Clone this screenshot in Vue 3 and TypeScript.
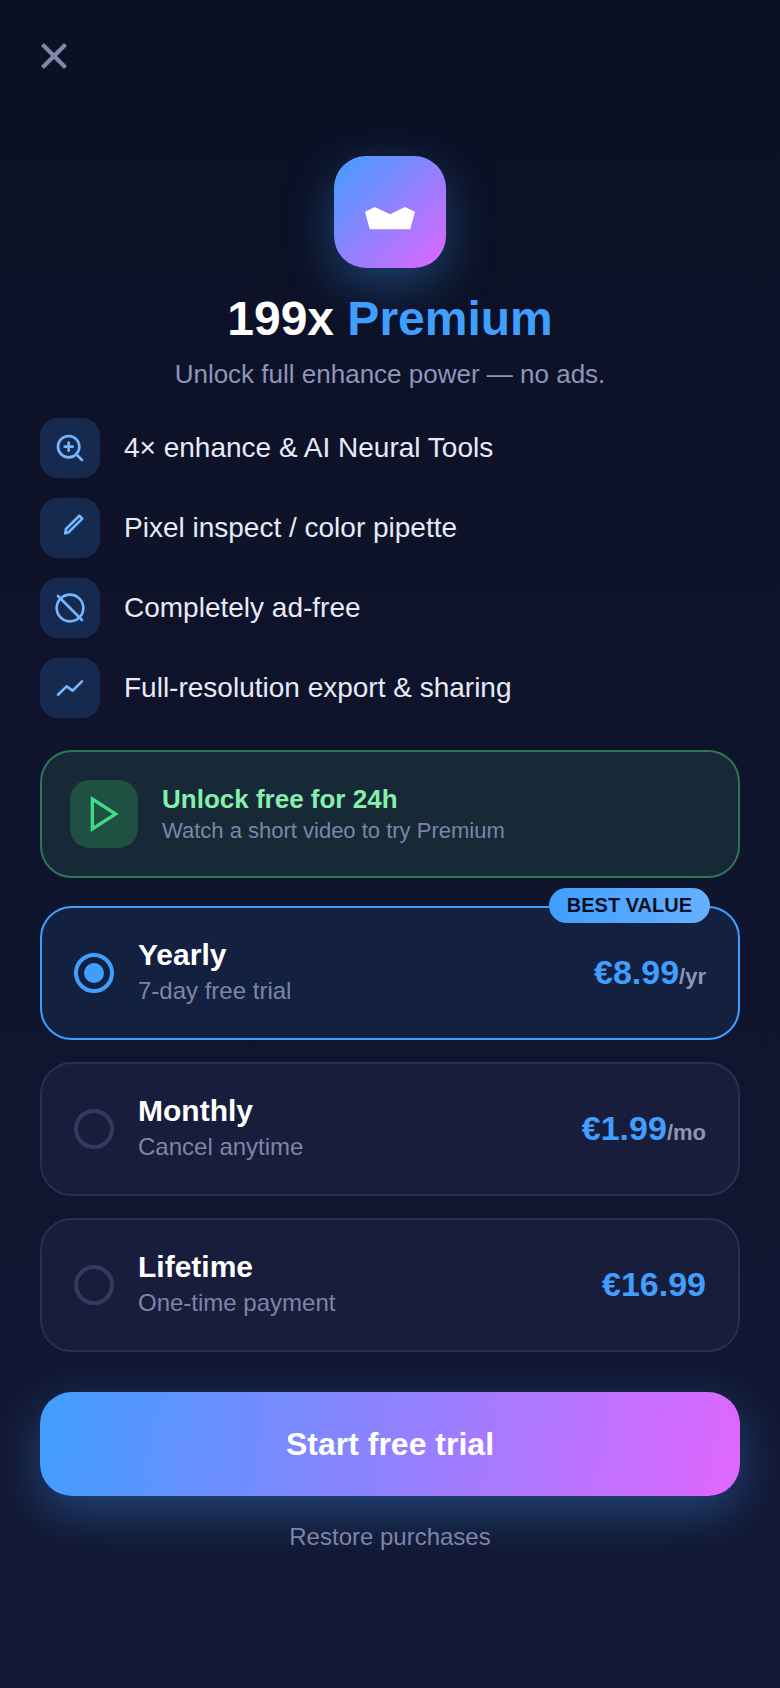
<script setup lang="ts">
interface Feature {
  label: string
  icon: 'zoom' | 'pencil' | 'ban' | 'chart'
}

interface Plan {
  id: string
  name: string
  note: string
  price: string
  unit?: string
}

const features: Feature[] = [
  { label: '4× enhance & AI Neural Tools', icon: 'zoom' },
  { label: 'Pixel inspect / color pipette', icon: 'pencil' },
  { label: 'Completely ad-free', icon: 'ban' },
  { label: 'Full-resolution export & sharing', icon: 'chart' },
]

const plans: Plan[] = [
  { id: 'yearly', name: 'Yearly', note: '7-day free trial', price: '€8.99', unit: '/yr' },
  { id: 'monthly', name: 'Monthly', note: 'Cancel anytime', price: '€1.99', unit: '/mo' },
  { id: 'lifetime', name: 'Lifetime', note: 'One-time payment', price: '€16.99' },
]

const selected = 'yearly'
</script>

<template>
  <div class="paywall">
    <button class="close" aria-label="Close">
      <svg width="28" height="26" viewBox="0 0 28 26" fill="none" stroke="#8187ab" stroke-width="4.2" stroke-linecap="butt">
        <path d="M2.5 1.5L25.5 24.5M25.5 1.5L2.5 24.5" />
      </svg>
    </button>

    <div class="logo">
      <svg width="60" height="60" viewBox="0 0 24 24" fill="#fff">
        <polygon points="2,11.9 6,10 12,12.9 18,10 22,11.9 20.1,18.9 3.9,18.9" />
      </svg>
    </div>

    <h1 class="title">199x <span>Premium</span></h1>
    <p class="subtitle">Unlock full enhance power — no ads.</p>

    <ul class="features">
      <li v-for="f in features" :key="f.label" class="feature">
        <span class="feature-icon">
          <svg width="32" height="32" viewBox="0 0 24 24" fill="none" stroke="#74b6ff" stroke-width="2" stroke-linecap="round" stroke-linejoin="round">
            <template v-if="f.icon === 'zoom'">
              <circle cx="11" cy="11" r="8" />
              <path d="M21 21l-4.35-4.35M11 8v6M8 11h6" />
            </template>
            <path v-else-if="f.icon === 'pencil'" d="M19 2.8L21.2 5 11 15.2 8.4 16 9 12.8z" />
            <template v-else-if="f.icon === 'ban'">
              <circle cx="12" cy="12" r="10" />
              <path d="M3 3l18 18" />
            </template>
            <path v-else d="M3 17l6.5-6.2 4.5 3.2 7-7" />
          </svg>
        </span>
        <span class="feature-label">{{ f.label }}</span>
      </li>
    </ul>

    <div class="free-card">
      <span class="free-icon">
        <svg width="40" height="40" viewBox="0 0 24 24" fill="none" stroke="#3ddc84" stroke-width="2">
          <polygon points="5,3 19,12 5,21" />
        </svg>
      </span>
      <div>
        <div class="free-title">Unlock free for 24h</div>
        <div class="free-note">Watch a short video to try Premium</div>
      </div>
    </div>

    <div class="plans">
      <div v-for="p in plans" :key="p.id" class="plan" :class="{ active: p.id === selected }">
        <span v-if="p.id === selected" class="badge">BEST VALUE</span>
        <span class="radio"><i v-if="p.id === selected" /></span>
        <div class="plan-text">
          <div class="plan-name">{{ p.name }}</div>
          <div class="plan-note">{{ p.note }}</div>
        </div>
        <div class="plan-price">{{ p.price }}<small v-if="p.unit">{{ p.unit }}</small></div>
      </div>
    </div>

    <button class="cta">Start free trial</button>
    <div class="restore">Restore purchases</div>
  </div>
</template>

<style scoped>
.paywall {
  box-sizing: border-box;
  min-height: 1688px;
  padding: 43px 40px 0;
  background: linear-gradient(180deg, #0b1024 0%, #131936 100%);
  font-family: "Liberation Sans", Arial, sans-serif;
  color: #fff;
}

.close {
  display: block;
  width: 28px;
  height: 26px;
  padding: 0;
  border: none;
  background: none;
}

.close svg {
  display: block;
}

.logo {
  display: flex;
  align-items: center;
  justify-content: center;
  width: 112px;
  height: 112px;
  margin: 87px auto 0;
  border-radius: 32px;
  background: linear-gradient(135deg, #409eff, #e066ff);
  box-shadow: 0 16px 48px rgba(64, 158, 255, 0.35);
}

.title {
  margin: 21px 0 0;
  font-size: 48px;
  line-height: 60px;
  font-weight: 700;
  text-align: center;
}

.title span {
  color: #409eff;
}

.subtitle {
  margin: 7px 0 0;
  font-size: 26px;
  line-height: 36px;
  color: #8e95b8;
  text-align: center;
}

.features {
  display: flex;
  flex-direction: column;
  gap: 20px;
  margin: 26px 0 0;
  padding: 0;
  list-style: none;
}

.feature {
  display: flex;
  align-items: center;
  gap: 24px;
}

.feature-icon {
  display: flex;
  align-items: center;
  justify-content: center;
  width: 60px;
  height: 60px;
  border-radius: 18px;
  background: #162a50;
}

.feature-label {
  font-size: 28px;
  color: #e8eaf6;
}

.free-card {
  display: flex;
  align-items: center;
  gap: 24px;
  box-sizing: border-box;
  height: 128px;
  margin-top: 32px;
  padding: 0 28px;
  border: 2px solid #2f7557;
  border-radius: 32px;
  background: #172937;
}

.free-icon {
  display: flex;
  align-items: center;
  justify-content: center;
  width: 68px;
  height: 68px;
  border-radius: 20px;
  background: #1f5041;
}

.free-title {
  font-size: 26px;
  line-height: 34px;
  font-weight: 700;
  color: #86efac;
}

.free-note {
  font-size: 22px;
  line-height: 30px;
  color: #7d84a8;
}

.plans {
  display: flex;
  flex-direction: column;
  gap: 22px;
  margin-top: 28px;
}

.plan {
  position: relative;
  display: flex;
  align-items: center;
  gap: 24px;
  box-sizing: border-box;
  height: 134px;
  padding: 0 32px;
  border: 2px solid #2a2f52;
  border-radius: 32px;
  background: #181d3b;
}

.plan.active {
  border-color: #409eff;
  background: #13203f;
}

.badge {
  position: absolute;
  top: -20px;
  right: 28px;
  padding: 0 18px;
  border-radius: 18px;
  background: linear-gradient(90deg, #409eff, #66b1ff);
  font-size: 20px;
  line-height: 35px;
  font-weight: 700;
  color: #0a1024;
}

.radio {
  display: flex;
  align-items: center;
  justify-content: center;
  box-sizing: border-box;
  width: 40px;
  height: 40px;
  border: 4px solid #333a60;
  border-radius: 50%;
}

.active .radio {
  border-color: #409eff;
}

.radio i {
  width: 20px;
  height: 20px;
  border-radius: 50%;
  background: #409eff;
}

.plan-text {
  flex: 1;
}

.plan-name {
  margin: -2px 0 2px;
  font-size: 30px;
  line-height: 36px;
  font-weight: 700;
}

.plan-note {
  font-size: 24px;
  line-height: 32px;
  color: #7d84a8;
}

.plan-price {
  margin-top: -2px;
  font-size: 34px;
  font-weight: 700;
  color: #409eff;
}

.plan-price small {
  font-size: 22px;
  color: #8e95b8;
}

.cta {
  display: block;
  width: 100%;
  height: 104px;
  margin-top: 40px;
  border: none;
  border-radius: 32px;
  background: linear-gradient(100deg, #409eff, #e066ff);
  box-shadow: 0 16px 48px rgba(64, 158, 255, 0.35);
  font-family: inherit;
  font-size: 32px;
  font-weight: 700;
  color: #fff;
}

.restore {
  margin-top: 25px;
  font-size: 24px;
  line-height: 32px;
  color: #7d84a8;
  text-align: center;
}
</style>
